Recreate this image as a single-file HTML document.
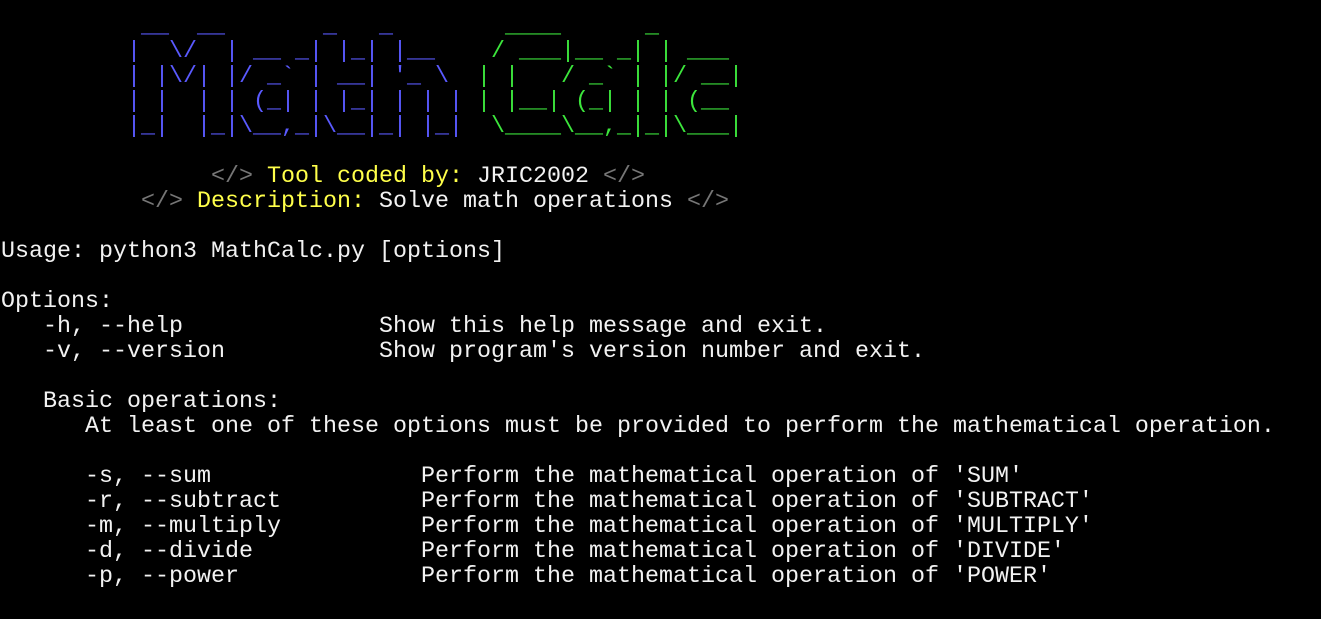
<!DOCTYPE html>
<html><head><meta charset="utf-8"><style>
html,body{margin:0;padding:0;background:#000;width:1321px;height:619px;overflow:hidden}
pre{margin:0;position:absolute;left:1px;top:15px;font-family:"Liberation Mono",monospace;font-size:23.33px;line-height:25px;color:#f2f2f2;white-space:pre}
.b{color:#5a5aff}.g{color:#3ce63c}.y{color:#ffff4a}.d{color:#767676}
</style></head><body><pre><span class="b">          __  __       _   _     </span><span class="g">   ____      _      </span>
<span class="b">         |  \/  | __ _| |_| |__  </span><span class="g">  / ___|__ _| | ___ </span>
<span class="b">         | |\/| |/ _` | __| '_ \ </span><span class="g"> | |   / _` | |/ __|</span>
<span class="b">         | |  | | (_| | |_| | | |</span><span class="g"> | |__| (_| | | (__ </span>
<span class="b">         |_|  |_|\__,_|\__|_| |_|</span><span class="g">  \____\__,_|_|\___|</span>

               <span class="d">&lt;/&gt;</span> <span class="y">Tool coded by:</span> JRIC2002 <span class="d">&lt;/&gt;</span>
          <span class="d">&lt;/&gt;</span> <span class="y">Description:</span> Solve math operations <span class="d">&lt;/&gt;</span>

Usage: python3 MathCalc.py [options]

Options:
   -h, --help              Show this help message and exit.
   -v, --version           Show program's version number and exit.

   Basic operations:
      At least one of these options must be provided to perform the mathematical operation.

      -s, --sum               Perform the mathematical operation of 'SUM'
      -r, --subtract          Perform the mathematical operation of 'SUBTRACT'
      -m, --multiply          Perform the mathematical operation of 'MULTIPLY'
      -d, --divide            Perform the mathematical operation of 'DIVIDE'
      -p, --power             Perform the mathematical operation of 'POWER'</pre></body></html>
